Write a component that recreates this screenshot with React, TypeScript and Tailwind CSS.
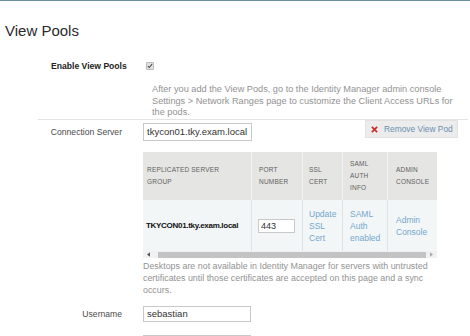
import React from 'react';

function Field({ value, w }: { value: string; w: string }) {
  return (
    <div className={`${w} h-[18px] border border-[#c9c9c9] bg-white px-[3px] text-[9.5px] leading-[16px] text-[#333] whitespace-nowrap overflow-hidden`}>
      {value}
    </div>
  );
}

function Check() {
  return (
    <span className="flex size-[8px] items-center justify-center rounded-[1px] border border-[#b9b9b9] bg-[#e2e2e2]">
      <svg viewBox="0 0 8 8" className="size-[6px]">
        <path d="M1.2 4.2 L3 6 L6.8 1.6" fill="none" stroke="#4a4a4a" strokeWidth="1.4" />
      </svg>
    </span>
  );
}

const heads = [
  { w: 'w-[109px]', pl: 'pl-[4px]', lines: ['Replicated Server', 'Group'] },
  { w: 'w-[51px]', pl: 'pl-[7px]', lines: ['Port', 'Number'] },
  { w: 'w-[40px]', pl: 'pl-[6px]', lines: ['SSL', 'Cert'] },
  { w: 'w-[45px]', pl: 'pl-[7px]', lines: ['SAML', 'Auth', 'Info'] },
  { w: 'w-[49px]', pl: 'pl-[8px]', lines: ['Admin', 'Console'] },
];

function Link({ lines }: { lines: string[] }) {
  return (
    <div className="text-[8.5px] leading-[12px] text-[#74a8cd]">
      {lines.map((l) => (
        <span key={l} className="block">{l}</span>
      ))}
    </div>
  );
}

export default function App() {
  return (
    <div className="h-[336px] w-[470px] overflow-hidden bg-white font-['Liberation_Sans',Arial,sans-serif]">
      <div className="h-px bg-[#6a8ea2]" />
      <h1 className="mt-[22px] pl-[5px] text-[15px] leading-[15px] text-[#2a2a2a]">View Pools</h1>

      <div className="mt-[22px] flex h-[12px] items-center pl-[51px]">
        <span className="w-[95px] text-[8.6px] font-bold leading-[12px] text-[#222]">Enable View Pools</span>
        <Check />
      </div>

      <p className="mt-[12px] ml-[152px] text-[9.2px] leading-[11.5px] text-[#929292] whitespace-nowrap">
        <span className="block">After you add the View Pods, go to the Identity Manager admin console</span>
        <span className="block">Settings &gt; Network Ranges page to customize the Client Access URLs for</span>
        <span className="block">the pods.</span>
      </p>

      <div className="ml-[38px] mr-[2px] h-px bg-[#e4e4e4]" />

      <div className="flex items-start">
        <span className="mt-[3px] w-[122px] text-right text-[8.6px] leading-[18px] text-[#4a4a4a]">Connection Server</span>
        <div className="ml-[21px] mt-[3.5px]">
          <Field value="tkycon01.tky.exam.local" w="w-[109px]" />
        </div>
        <button
          type="button"
          className="ml-auto mr-[12px] mt-[0.5px] flex h-[18px] w-[93px] items-center gap-[6px] border border-[#e2e2e2] bg-[#ececec] pl-[5px] text-[8.4px] text-[#6990b0]"
        >
          <svg viewBox="0 0 8 8" className="size-[7px]">
            <path d="M1 1 L7 7 M7 1 L1 7" stroke="#cc2b2b" strokeWidth="2" />
          </svg>
          Remove View Pod
        </button>
      </div>

      <div className="ml-[143px] mt-[11px] w-[294px]">
        <div className="flex h-[48px] bg-[#e5e5e3]">
          {heads.map((h, i) => (
            <div
              key={i}
              className={`${h.w} ${h.pl} flex flex-col justify-center border-r border-[#f3f3f3] text-[6.5px] uppercase leading-[12px] tracking-[0.2px] text-[#5e5e5e] last:border-r-0`}
            >
              {h.lines.map((l) => (
                <span key={l}>{l}</span>
              ))}
            </div>
          ))}
        </div>
        <div className="flex h-[51px] bg-[#f3f6f7]">
          <div className="flex w-[109px] items-center border-r border-[#dfe3e5] pl-[3px] text-[8px] font-bold tracking-[-0.3px] text-[#111]">
            TKYCON01.tky.exam.local
          </div>
          <div className="flex w-[51px] items-center border-r border-[#dfe3e5] pl-[6px]">
            <div className="h-[14px] w-[37px] border border-[#c9c9c9] bg-white pl-[2px] text-[9px] leading-[12px] text-[#333]">443</div>
          </div>
          <div className="flex w-[40px] items-center border-r border-[#dfe3e5] pl-[6px]">
            <Link lines={['Update', 'SSL', 'Cert']} />
          </div>
          <div className="flex w-[45px] items-center border-r border-[#dfe3e5] pl-[7px]">
            <Link lines={['SAML', 'Auth', 'enabled']} />
          </div>
          <div className="flex w-[49px] items-center pl-[8px]">
            <Link lines={['Admin', 'Console']} />
          </div>
        </div>
        <div className="flex h-[7px] items-center bg-[#f1f1f1]">
          <svg viewBox="0 0 4 6" className="ml-[4px] h-[5px] w-[3px]">
            <path d="M4 0 L0 3 L4 6 Z" fill="#555" />
          </svg>
          <div className="ml-[8px] h-[6px] w-[268px] bg-[#c3c3c3]" />
          <svg viewBox="0 0 4 6" className="ml-[4px] h-[5px] w-[3px]">
            <path d="M0 0 L4 3 L0 6 Z" fill="#aaa" />
          </svg>
        </div>
      </div>

      <p className="ml-[143px] mt-[1.5px] text-[8.9px] leading-[12px] text-[#929292] whitespace-nowrap">
        <span className="block">Desktops are not available in Identity Manager for servers with untrusted</span>
        <span className="block">certificates until those certificates are accepted on this page and a sync</span>
        <span className="block">occurs.</span>
      </p>

      <div className="mt-[10px] flex items-center">
        <span className="w-[122px] text-right text-[8.6px] leading-[16px] text-[#4a4a4a]">Username</span>
        <div className="ml-[21px] h-[16px] w-[108px] border border-[#c9c9c9] bg-white px-[3px] text-[9.5px] leading-[14px] text-[#333]">
          sebastian
        </div>
      </div>

      <div className="ml-[143px] mt-[13px] h-[16px] w-[108px] border border-[#c9c9c9] bg-white" />
    </div>
  );
}
